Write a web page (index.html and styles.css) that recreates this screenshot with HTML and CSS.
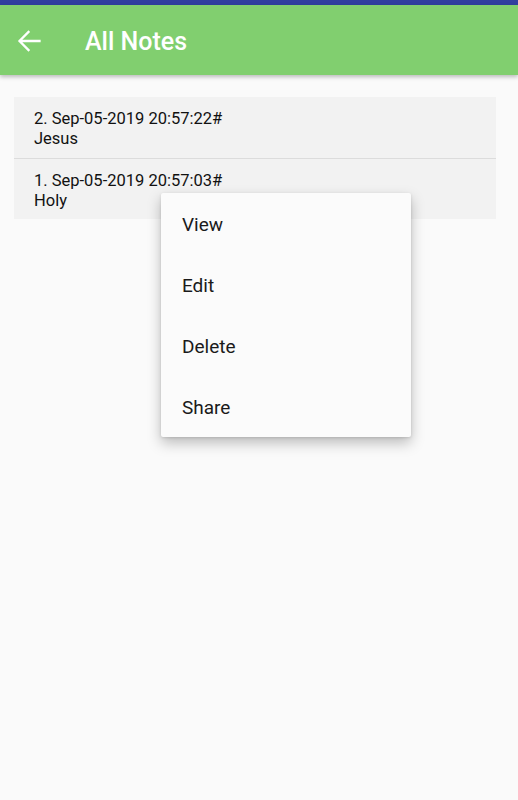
FILE: index.html
```html
<!DOCTYPE html>
<html>
<head>
<meta charset="utf-8">
<link rel="stylesheet" href="styles.css">
</head>
<body>
<div class="status"></div>
<header class="toolbar">
  <svg class="back" width="26" height="26" viewBox="0 0 26 26"><path d="M4 14H23.5M12.5 5L3.5 14L12.5 23" fill="none" stroke="#fff" stroke-width="2.3" stroke-linecap="square" stroke-linejoin="miter"/></svg>
  <h1 class="title">All Notes</h1>
</header>
<main class="content">
  <ul class="list">
    <li class="item"><div>2. Sep-05-2019 20:57:22#</div><div>Jesus</div></li>
    <li class="item"><div>1. Sep-05-2019 20:57:03#</div><div>Holy</div></li>
  </ul>
  <div class="menu">
    <div class="menu-item">View</div>
    <div class="menu-item">Edit</div>
    <div class="menu-item">Delete</div>
    <div class="menu-item">Share</div>
  </div>
</main>
</body>
</html>
```
FILE: styles.css
```css
html, body {
  margin: 0;
  padding: 0;
  height: 100%;
  background: #fafafa;
  font-family: Roboto, "Noto Sans", sans-serif;
}
.status {
  height: 5px;
  background: #303f9f;
}
.toolbar {
  height: 70px;
  background: #81cf6f;
  display: flex;
  align-items: center;
  padding-left: 16px;
  box-shadow: 0 2px 4px rgba(0,0,0,0.25);
  position: relative;
  z-index: 1;
}
.back {
  width: 26px;
  height: 26px;
}
.title {
  margin: 2px 0 0 43px;
  color: #fff;
  font-size: 25px;
  font-weight: 500;
}
.content {
  position: relative;
  padding: 22px 22px 0 14px;
}
.list {
  list-style: none;
  margin: 0;
  padding: 0;
}
.item {
  background: #f2f2f2;
  height: 61px;
  box-sizing: border-box;
  padding: 12px 20px 0;
  font-size: 16.5px;
  line-height: 20px;
  color: #111;
}
.item + .item {
  border-top: 1px solid #dcdcdc;
}
.menu {
  position: absolute;
  left: 161px;
  top: 118px;
  width: 250px;
  background: #fbfbfb;
  border-radius: 2px;
  box-shadow: 0 6px 14px rgba(0,0,0,0.25), 0 1px 3px rgba(0,0,0,0.12);
  padding: 0;
}
.menu-item {
  height: 61px;
  box-sizing: border-box;
  padding: 2px 0 0 21px;
  display: flex;
  align-items: center;
  font-size: 19px;
  color: #1a1a1a;
}
```
